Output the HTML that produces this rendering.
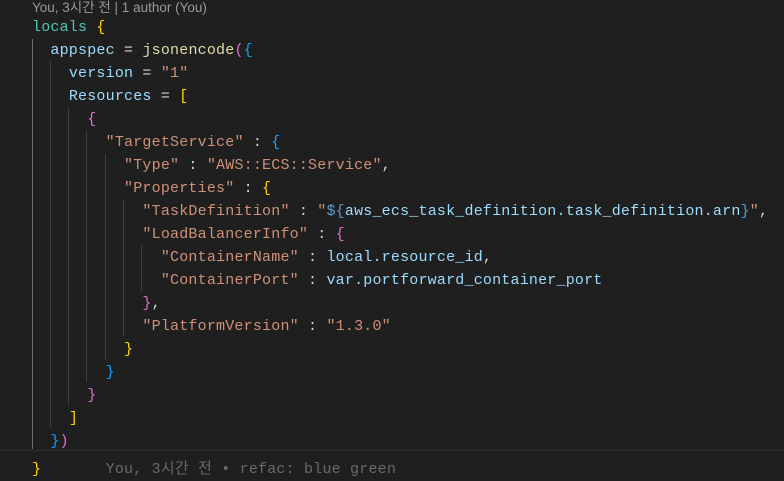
<!DOCTYPE html>
<html><head><meta charset="utf-8"><style>
html,body{margin:0;padding:0;background:#1f1f1f;width:784px;height:461px;overflow:hidden}
.l{position:absolute;left:32px;height:23px;line-height:23px;font-family:"Liberation Mono","Noto Sans CJK KR",monospace;font-size:15px;letter-spacing:0.2px;white-space:pre;color:#d4d4d4}
.cl{position:absolute;left:32px;top:0;height:16px;line-height:16px;font-family:"Liberation Sans","Noto Sans CJK KR",sans-serif;font-size:13.5px;color:#999}
.g{position:absolute;width:1px;background:#404040}
.t{color:#4ec9b0}.v{color:#9cdcfe}.f{color:#dcdcaa}.s{color:#ce9178}.k{color:#569cd6}
.y{color:#ffd700}.p{color:#da70d6}.b{color:#179fff}.gr{color:#6a6a6a}
.hl{position:absolute;left:0;top:450px;width:784px;height:23px;border-top:1px solid #2e2e2e}
</style></head><body>
<div class="cl">You, 3시간 전 | 1 author (You)</div>
<div class="hl"></div>
<div class="g" style="left:32px;top:39px;height:410px;background:#6e6e6e"></div>
<div class="g" style="left:50px;top:62px;height:365px"></div>
<div class="g" style="left:68px;top:108px;height:297px"></div>
<div class="g" style="left:86px;top:131px;height:251px"></div>
<div class="g" style="left:105px;top:154px;height:205px"></div>
<div class="g" style="left:123px;top:200px;height:136px"></div>
<div class="g" style="left:141px;top:246px;height:45px"></div>
<div class="l" style="top:16px"><span class="t">locals</span> <span class="y">{</span></div>
<div class="l" style="top:39px">  <span class="v">appspec</span> = <span class="f">jsonencode</span><span class="p">(</span><span class="b">{</span></div>
<div class="l" style="top:62px">    <span class="v">version</span> = <span class="s">"1"</span></div>
<div class="l" style="top:85px">    <span class="v">Resources</span> = <span class="y">[</span></div>
<div class="l" style="top:108px">      <span class="p">{</span></div>
<div class="l" style="top:131px">        <span class="s">"TargetService"</span> : <span class="b">{</span></div>
<div class="l" style="top:154px">          <span class="s">"Type"</span> : <span class="s">"AWS::ECS::Service"</span>,</div>
<div class="l" style="top:177px">          <span class="s">"Properties"</span> : <span class="y">{</span></div>
<div class="l" style="top:200px">            <span class="s">"TaskDefinition"</span> : <span class="s">"</span><span class="k">${</span><span class="v">aws_ecs_task_definition.task_definition.arn</span><span class="k">}</span><span class="s">"</span>,</div>
<div class="l" style="top:223px">            <span class="s">"LoadBalancerInfo"</span> : <span class="p">{</span></div>
<div class="l" style="top:246px">              <span class="s">"ContainerName"</span> : <span class="v">local.resource_id</span>,</div>
<div class="l" style="top:269px">              <span class="s">"ContainerPort"</span> : <span class="v">var.portforward_container_port</span></div>
<div class="l" style="top:292px">            <span class="p">}</span>,</div>
<div class="l" style="top:315px">            <span class="s">"PlatformVersion"</span> : <span class="s">"1.3.0"</span></div>
<div class="l" style="top:338px">          <span class="y">}</span></div>
<div class="l" style="top:361px">        <span class="b">}</span></div>
<div class="l" style="top:384px">      <span class="p">}</span></div>
<div class="l" style="top:407px">    <span class="y">]</span></div>
<div class="l" style="top:430px">  <span class="b">}</span><span class="p">)</span></div>
<div class="l" style="top:458px"><span class="y">}</span><span class="gr">       You, 3시간 전 • refac: blue green</span></div>
</body></html>
